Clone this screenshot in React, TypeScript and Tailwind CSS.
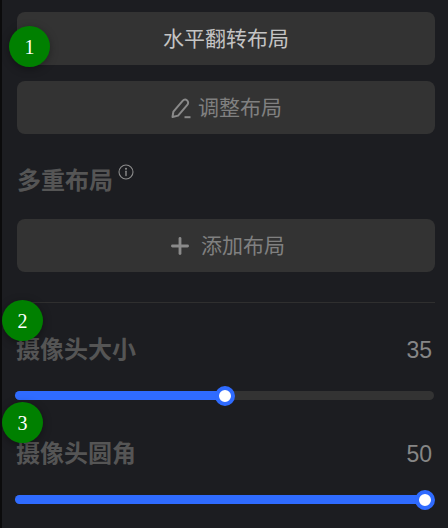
import { Plus } from "lucide-react";

const cjk = "font-['Inter','Liberation_Sans','Noto_Sans_CJK_SC',sans-serif]";

const Badge = ({ n, className }: { n: number; className: string }) => (
  <div
    className={`absolute flex h-[41px] w-[41px] items-center justify-center rounded-full bg-[#008000] font-['Liberation_Serif',serif] text-[20px] text-white shadow-[0_2px_8px_rgba(0,0,0,0.35)] ${className}`}
  >
    {n}
  </div>
);

const PenIcon = () => (
  <svg width="22" height="22" viewBox="0 0 22 22" fill="none" stroke="#8a8a8a" strokeWidth="2" strokeLinejoin="round" strokeLinecap="round">
    <path d="M2.5 20 L3.4 14.6 L12.6 3.9 C13.8 2.5 15.8 2.3 17.1 3.4 C18.4 4.5 18.5 6.4 17.3 7.8 L8.1 18.6 Z" />
    <path d="M14.5 20.2 H20.5" strokeLinecap="butt" />
  </svg>
);

const InfoIcon = () => (
  <svg width="16" height="16" viewBox="0 0 16 16" fill="none" stroke="#8c8c8c" strokeWidth="1.1" strokeLinecap="round">
    <circle cx="8" cy="8" r="7" />
    <path d="M8 7.2 V11.6" strokeWidth="1.4" />
    <circle cx="8" cy="4.8" r="0.5" fill="#8c8c8c" />
  </svg>
);

const LayoutButton = ({ children, className }: { children: React.ReactNode; className?: string }) => (
  <div className={`flex h-[53px] items-center justify-center rounded-lg bg-[#333333] ${className ?? ""}`}>{children}</div>
);

const SliderRow = ({ label, value, percent }: { label: string; value: number; percent: number }) => (
  <div>
    <div className="flex items-center justify-between pr-[3px]">
      <span className="-ml-px text-[24px] leading-[30px] font-bold text-[#555555]">{label}</span>
      <span className="font-['Liberation_Sans',sans-serif] text-[23px] leading-[30px] text-[#868686]">{value}</span>
    </div>
    <div className="relative mt-[26px] -ml-[2px] h-[9px] w-[419px] rounded-full bg-[#333333]">
      <div className="h-full rounded-full bg-[#2f6bff]" style={{ width: `${percent}%` }} />
      <div
        className="absolute top-1/2 h-[20px] w-[20px] -translate-x-1/2 -translate-y-1/2 rounded-full border-[4px] border-[#2f6bff] bg-white"
        style={{ left: `${percent}%` }}
      />
    </div>
  </div>
);

export default function App() {
  return (
    <div className={`relative h-[528px] w-[448px] overflow-hidden border-l-2 border-[#0b0b0c] bg-[#1c1d21] ${cjk}`}>
      <div className="w-[433px] pt-[12px] pl-[15px]">
        <LayoutButton>
          <span className="text-[21px] leading-[28px] text-[#c4c4c4]">水平翻转布局</span>
        </LayoutButton>
        <LayoutButton className="mt-[16px] gap-[6px]">
          <PenIcon />
          <span className="text-[21px] leading-[28px] text-[#808080]">调整布局</span>
        </LayoutButton>
        <div className="mt-[31px] flex items-start">
          <span className="text-[24px] leading-[32px] font-bold text-[#555555]">多重布局</span>
          <span className="mt-[-1px] ml-[5px]">
            <InfoIcon />
          </span>
        </div>
        <LayoutButton className="mt-[22px] gap-[8px]">
          <Plus size={26} strokeWidth={2.6} color="#8a8a8a" />
          <span className="text-[21px] leading-[28px] text-[#808080]">添加布局</span>
        </LayoutButton>
        <div className="mt-[30px] h-px bg-[#2f2f2f]" />
      </div>
      <div className="mt-[32px] flex w-[433px] flex-col gap-[39px] pl-[15px]">
        <SliderRow label="摄像头大小" value={35} percent={50} />
        <SliderRow label="摄像头圆角" value={50} percent={97.8} />
      </div>
      <Badge n={1} className="top-[26px] left-[7px]" />
      <Badge n={2} className="top-[300px] left-0" />
      <Badge n={3} className="top-[402px] left-0" />
    </div>
  );
}
